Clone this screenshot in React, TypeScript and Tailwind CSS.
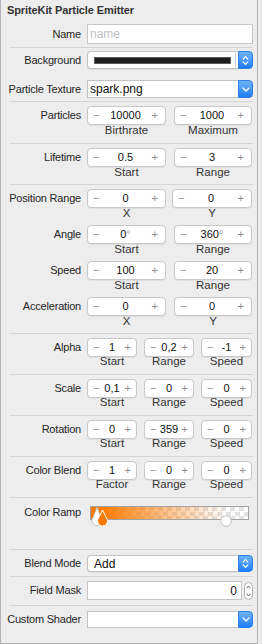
import React from "react";

function Label({ children }: { children: React.ReactNode }) {
  return (
    <div className="h-[19px] w-[80px] shrink-0 whitespace-nowrap text-right text-[11px] leading-[19px] tracking-[-0.2px] text-[#262626]">
      {children}
    </div>
  );
}

function Sep() {
  return <div className="ml-[9px] h-px w-[243px] shrink-0 bg-[#d5d5d5]" />;
}

function UpDown({ color = "white" }: { color?: string }) {
  return (
    <svg width="7" height="11" viewBox="0 0 7 11" fill="none" stroke={color} strokeWidth="1.2" strokeLinecap="round" strokeLinejoin="round">
      <path d="M1.2 4 L3.5 1.7 L5.8 4" />
      <path d="M1.2 7 L3.5 9.3 L5.8 7" />
    </svg>
  );
}

function Down() {
  return (
    <svg width="8" height="5" viewBox="0 0 8 5" fill="none" stroke="white" strokeWidth="1.3" strokeLinecap="round" strokeLinejoin="round">
      <path d="M1 1 L4 4 L7 1" />
    </svg>
  );
}

function BlueBtn({ children }: { children: React.ReactNode }) {
  return (
    <div className="flex w-[15px] shrink-0 items-center justify-center rounded-r-[4px] border border-[#2d7fe6] bg-gradient-to-b from-[#6cb3fb] to-[#1b7df3]">
      {children}
    </div>
  );
}

type CellT = { v: React.ReactNode; sub: string; w: string };

function Stepper({ v, sub, w, three }: CellT & { three?: boolean }) {
  return (
    <div className={`flex shrink-0 flex-col items-center ${w}`}>
      <div
        className={`flex h-[19px] w-full items-center rounded-[4px] border border-[#c8c8c8] bg-white shadow-[0_1px_0_rgba(0,0,0,0.05)] ${
          three ? "px-[5px]" : "pl-[5px] pr-[7px]"
        }`}
      >
        <span className="text-[11px] leading-none text-[#8e8e8e]">−</span>
        <span className="flex-1 whitespace-nowrap text-center text-[11px] leading-none text-[#111111]">{v}</span>
        <span className="text-[11px] leading-none text-[#8e8e8e]">+</span>
      </div>
      <div className={`whitespace-nowrap text-[11.5px] leading-[11px] text-[#333333] ${three ? "-mt-px" : ""}`}>{sub}</div>
    </div>
  );
}

function StepRow({
  label,
  cells,
  gap,
  three,
  tall,
}: {
  label: string;
  cells: CellT[];
  gap: string;
  three?: boolean;
  tall?: boolean;
}) {
  return (
    <div className={`flex shrink-0 ${tall ? "h-[37px]" : "h-[36px]"}`}>
      <Label>{label}</Label>
      <div className={`ml-[6px] flex ${gap}`}>
        {cells.map((c, i) => (
          <Stepper key={i} {...c} three={three} />
        ))}
      </div>
    </div>
  );
}

const deg = (n: string) => (
  <span>
    {n}
    <span className="text-[#9a9a9a]">°</span>
  </span>
);

export default function App() {
  const w1 = "w-[79px]";
  const w2 = "w-[78px]";
  const a = "w-[50px]";
  const c = "w-[51px]";
  return (
    <div className="flex h-[644px] w-[262px] bg-[#ececec] font-['Liberation_Sans',Arial,sans-serif]">
      <div className="flex h-[644px] w-[258px] shrink-0 flex-col border-x border-b border-[#b3b3b3] bg-[#ededed]">
        {/* Title */}
        <div className="h-[20px] shrink-0 pl-[6px] text-[11px] font-bold leading-[20px] tracking-[-0.1px] text-[#333333]">
          SpriteKit Particle Emitter
        </div>

        {/* Name */}
        <div className="mt-[4px] flex h-[20px] shrink-0 items-center">
          <Label>Name</Label>
          <div className="ml-[6px] flex h-[20px] w-[166px] items-center border border-[#c6c6c6] bg-white pl-[2px] text-[12px] text-[#c2c2c2]">
            name
          </div>
        </div>
        <div className="mt-[3px]">
          <Sep />
        </div>

        {/* Background */}
        <div className="mt-[3px] flex h-[18px] shrink-0 items-center">
          <Label>Background</Label>
          <div className="ml-[6px] flex h-[18px] w-[166px]">
            <div className="flex flex-1 items-center rounded-l-[4px] border border-r-0 border-[#c2c2c2] bg-white pl-[6px] shadow-[0_1px_0_rgba(0,0,0,0.06)]">
              <div className="h-[7px] w-[137px] border border-[#5c5c5c] bg-[#1e1e1e]" />
              <div className="flex-1" />
              <div className="mr-[2px] h-full w-px bg-[#d2d2d2]" />
            </div>
            <BlueBtn>
              <UpDown />
            </BlueBtn>
          </div>
        </div>

        {/* Particle Texture */}
        <div className="mt-[11px] flex h-[18px] shrink-0 items-center">
          <Label>Particle Texture</Label>
          <div className="ml-[6px] flex h-[18px] w-[166px]">
            <div className="flex flex-1 items-center border border-r-0 border-[#c2c2c2] bg-white pl-[2px] text-[12px] text-[#111111]">
              spark.png
            </div>
            <BlueBtn>
              <Down />
            </BlueBtn>
          </div>
        </div>
        <div className="mt-[3px] mb-[4px]">
          <Sep />
        </div>

        <StepRow
          tall
          label="Particles"
          gap="gap-[8px]"
          cells={[
            { v: "10000", sub: "Birthrate", w: w1 },
            { v: "1000", sub: "Maximum", w: w2 },
          ]}
        />
        <Sep />
        <div className="mt-[4px]" />
        <StepRow
          label="Lifetime"
          gap="gap-[8px]"
          cells={[
            { v: "0.5", sub: "Start", w: w1 },
            { v: "3", sub: "Range", w: w2 },
          ]}
        />
        <Sep />
        <div className="mt-[4px]" />
        <StepRow
          label="Position Range"
          gap="gap-[6px]"
          cells={[
            { v: "0", sub: "X", w: w1 },
            { v: "0", sub: "Y", w: "w-[80px]" },
          ]}
        />
        <StepRow
          label="Angle"
          gap="gap-[8px]"
          cells={[
            { v: deg("0"), sub: "Start", w: w1 },
            { v: deg("360"), sub: "Range", w: w2 },
          ]}
        />
        <StepRow
          label="Speed"
          gap="gap-[8px]"
          cells={[
            { v: "100", sub: "Start", w: w1 },
            { v: "20", sub: "Range", w: w2 },
          ]}
        />
        <StepRow
          label="Acceleration"
          gap="gap-[8px]"
          cells={[
            { v: "0", sub: "X", w: w1 },
            { v: "0", sub: "Y", w: w2 },
          ]}
        />
        <Sep />
        <div className="mt-[4px]" />
        <StepRow
          three
          label="Alpha"
          gap="gap-[7px]"
          cells={[
            { v: "1", sub: "Start", w: a },
            { v: "0,2", sub: "Range", w: a },
            { v: "-1", sub: "Speed", w: c },
          ]}
        />
        <Sep />
        <div className="mt-[4px]" />
        <StepRow
          three
          label="Scale"
          gap="gap-[7px]"
          cells={[
            { v: "0,1", sub: "Start", w: a },
            { v: "0", sub: "Range", w: a },
            { v: "0", sub: "Speed", w: c },
          ]}
        />
        <Sep />
        <div className="mt-[4px]" />
        <StepRow
          three
          label="Rotation"
          gap="gap-[7px]"
          cells={[
            { v: "0", sub: "Start", w: a },
            { v: "359", sub: "Range", w: a },
            { v: "0", sub: "Speed", w: c },
          ]}
        />
        <Sep />
        <div className="mt-[4px]" />
        <StepRow
          three
          label="Color Blend"
          gap="gap-[7px]"
          cells={[
            { v: "1", sub: "Factor", w: a },
            { v: "0", sub: "Range", w: a },
            { v: "0", sub: "Speed", w: c },
          ]}
        />
        <Sep />

        {/* Color Ramp */}
        <div className="mt-[4px] flex h-[47px] shrink-0 items-start">
          <div className="mt-[1px]">
            <Label>Color Ramp</Label>
          </div>
          <div className="relative ml-[9px] mt-[4px] h-[14px] w-[159px] border border-[#a3a3a3] bg-[conic-gradient(#e2e2e2_25%,#ffffff_0_50%,#e2e2e2_0_75%,#ffffff_0)] bg-[length:9px_9px]">
            <div className="h-full w-full bg-[linear-gradient(to_right,#ff7a00_6%,rgba(255,122,0,0.55)_40%,rgba(255,122,0,0)_86%)]" />
            <svg className="absolute left-[-1px] top-[-1px] overflow-visible" width="159" height="14" viewBox="0 0 159 14">
              <path d="M7 1 L11 11.5 A5 5 0 1 1 3 11.5 Z" fill="#ffffff" stroke="#b0b0b0" strokeWidth="0.8" />
              <path d="M12.5 4 L16.3 11.8 A5 5 0 1 1 8.7 11.8 Z" fill="#ff7a00" stroke="#ffffff" strokeWidth="1" />
              <circle cx="136" cy="15" r="5.2" fill="#ffffff" stroke="#b5b5b5" strokeWidth="0.8" />
            </svg>
          </div>
        </div>
        <Sep />

        {/* Blend Mode */}
        <div className="mt-[5px] flex h-[17px] shrink-0 items-center">
          <Label>Blend Mode</Label>
          <div className="ml-[6px] flex h-[17px] w-[166px]">
            <div className="flex flex-1 items-center rounded-l-[4px] border border-r-0 border-[#c2c2c2] bg-white pl-[6px] text-[12px] text-[#111111] shadow-[0_1px_0_rgba(0,0,0,0.06)]">
              Add
            </div>
            <BlueBtn>
              <UpDown />
            </BlueBtn>
          </div>
        </div>
        <div className="mt-[4px]">
          <Sep />
        </div>

        {/* Field Mask */}
        <div className="mt-[4px] flex h-[19px] shrink-0 items-center">
          <Label>Field Mask</Label>
          <div className="ml-[6px] flex h-[19px] w-[155px] items-center justify-end border border-[#c6c6c6] bg-white pr-[4px] text-[12px] text-[#111111]">
            0
          </div>
          <div className="ml-[2px] flex h-[18px] w-[9px] flex-col items-center justify-between rounded-full border border-[#b3b3b3] bg-white py-[2px]">
            <svg width="5" height="4" viewBox="0 0 5 4" fill="none" stroke="#555555" strokeWidth="0.9">
              <path d="M0.6 3.2 L2.5 1 L4.4 3.2" />
            </svg>
            <svg width="5" height="4" viewBox="0 0 5 4" fill="none" stroke="#555555" strokeWidth="0.9">
              <path d="M0.6 0.8 L2.5 3 L4.4 0.8" />
            </svg>
          </div>
        </div>
        <div className="mt-[5px]">
          <Sep />
        </div>

        {/* Custom Shader */}
        <div className="mt-[5px] flex h-[17px] shrink-0 items-center">
          <Label>Custom Shader</Label>
          <div className="ml-[6px] flex h-[17px] w-[166px]">
            <div className="flex-1 border border-r-0 border-[#c2c2c2] bg-white" />
            <BlueBtn>
              <Down />
            </BlueBtn>
          </div>
        </div>
      </div>
    </div>
  );
}
